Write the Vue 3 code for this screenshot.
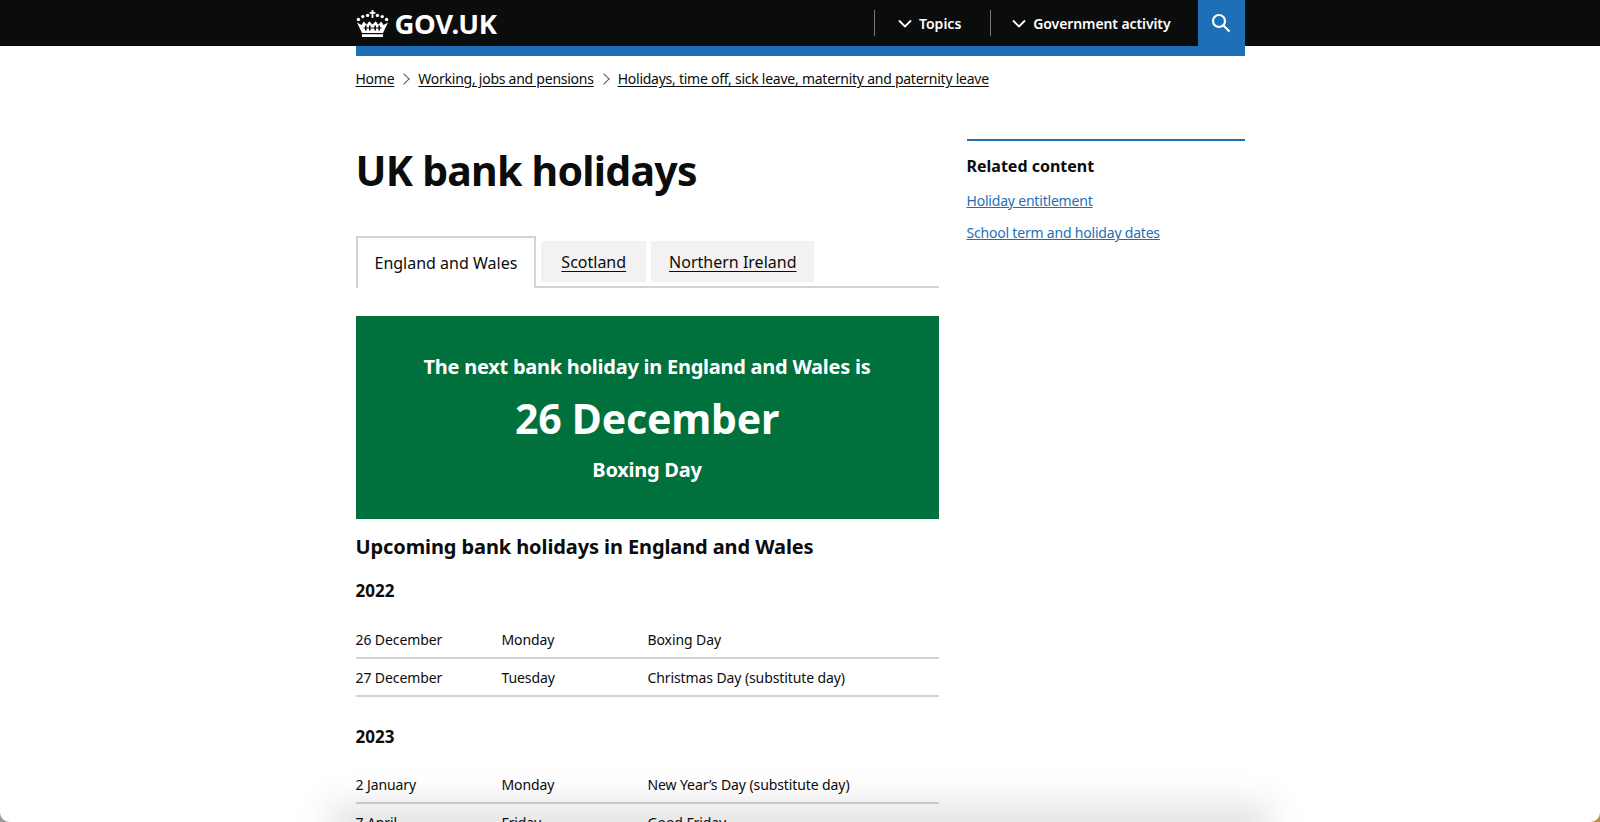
<script setup>
const crumbs = [
  'Home',
  'Working, jobs and pensions',
  'Holidays, time off, sick leave, maternity and paternity leave'
]
const tabs = [
  { name: 'Scotland', cls: 'wide' },
  { name: 'Northern Ireland', cls: '' }
]
const years = [
  {
    year: '2022',
    rows: [
      ['26 December', 'Monday', 'Boxing Day'],
      ['27 December', 'Tuesday', 'Christmas Day (substitute day)']
    ]
  },
  {
    year: '2023',
    rows: [
      ['2 January', 'Monday', "New Year\u2019s Day (substitute day)"],
      ['7 April', 'Friday', 'Good Friday']
    ]
  }
]
</script>

<template>
  <div class="page">
    <header class="top">
      <div class="top_inner">
        <a class="logo">
          <svg width="34" height="27" viewBox="0 0 34 27" fill="#fff">
            <path d="M15.6 0h1.8v2h2v1.7h-2V8h-1.8V3.7h-2V2h2z"/>
            <circle cx="2.4" cy="9.5" r="1.7"/><circle cx="6.8" cy="6.6" r="1.7"/><circle cx="11.6" cy="5.4" r="1.7"/>
            <circle cx="21.4" cy="5.4" r="1.7"/><circle cx="26.2" cy="6.6" r="1.7"/><circle cx="30.6" cy="9.5" r="1.7"/>
            <path d="M1 12.5l4.5 2.5 2.2-3.6 3 3.4 2.5-3.6 3.3 3.2 3.3-3.2 2.5 3.6 3-3.4 2.2 3.6 4.5-2.5-5 10.5H6z"/>
            <path d="M9 15.5h1.6v5H9zM13 15.5h1.6v5H13zM18.4 15.5H20v5h-1.6zM22.4 15.5H24v5h-1.6zM7.5 17.4h18v1.2h-18z" fill="#0b0c0c"/>
            <path d="M6 24.2h21V27H6z"/>
          </svg>
          <span>GOV.UK</span>
        </a>
        <nav class="menu">
          <a class="menu_item first">
            <svg width="14" height="9" viewBox="0 0 14 9"><path d="M1 1.5l6 6 6-6" fill="none" stroke="#fff" stroke-width="1.8"/></svg>
            Topics
          </a>
          <a class="menu_item">
            <svg width="14" height="9" viewBox="0 0 14 9"><path d="M1 1.5l6 6 6-6" fill="none" stroke="#fff" stroke-width="1.8"/></svg>
            <span class="gov_text">Government activity</span>
          </a>
          <a class="search">
            <svg width="20" height="20" viewBox="0 0 20 20" fill="none" stroke="#fff" stroke-width="2.2">
              <circle cx="8" cy="8" r="6"/><path d="M12.5 12.5l6 6"/>
            </svg>
          </a>
        </nav>
      </div>
    </header>

    <div class="wrap">
      <div class="blue_bar"></div>
      <ol class="crumbs">
        <li v-for="(c, i) in crumbs" :key="c">
          <span v-if="i > 0" class="chev"></span>
          <a>{{ c }}</a>
        </li>
      </ol>

      <div class="cols">
        <main class="main">
          <h1>UK bank holidays</h1>
          <div class="tabs">
            <span class="tab active">England and Wales</span>
            <a v-for="t in tabs" :key="t.name" class="tab" :class="t.cls">{{ t.name }}</a>
          </div>

          <section class="banner">
            <p class="banner_top">The next bank holiday in England and Wales is</p>
            <p class="banner_date">26 December</p>
            <p class="banner_name">Boxing Day</p>
          </section>

          <h2>Upcoming bank holidays in England and Wales</h2>
          <div v-for="y in years" :key="y.year" class="year">
            <h3>{{ y.year }}</h3>
            <div v-for="r in y.rows" :key="r[0]" class="row">
              <span>{{ r[0] }}</span>
              <span>{{ r[1] }}</span>
              <span>{{ r[2] }}</span>
            </div>
          </div>
        </main>

        <aside class="side">
          <h4>Related content</h4>
          <a>Holiday entitlement</a>
          <a>School term and holiday dates</a>
        </aside>
      </div>
    </div>
    <div class="fade"></div>
    <div class="corner left"></div>
    <div class="corner right"></div>
  </div>
</template>

<style>
html, body { margin: 0; height: 100%; overflow: hidden; background: #fff; }
</style>

<style scoped>
.page {
  height: 822px;
  overflow: hidden;
  position: relative;
  font-family: "Noto Sans", "Liberation Sans", sans-serif;
  color: #0b0c0c;
  background: #fff;
}
a { color: inherit; }
.top { background: #0b0c0c; height: 46px; }
.top_inner {
  width: 889px;
  height: 46px;
  margin: 0 auto;
  display: flex;
  justify-content: space-between;
  align-items: center;
}
.logo { display: flex; align-items: center; gap: 5px; color: #fff; font-weight: 700; font-size: 27.5px; letter-spacing: -0.3px; }
.menu { display: flex; align-items: center; height: 46px; }
.menu_item {
  display: flex;
  align-items: center;
  gap: 7px;
  height: 26px;
  padding: 0 27px 0 21px;
  border-left: 1px solid #777;
  color: #fff;
  font-size: 14px;
  font-weight: 600;
}
.menu_item.first { padding: 0 29px 0 23px; }
.gov_text { letter-spacing: -0.1px; }
.search {
  width: 47px;
  height: 46px;
  background: #1d70b8;
  display: flex;
  align-items: center;
  justify-content: center;
}
.wrap { width: 889px; margin: 0 auto; }
.blue_bar { height: 10px; background: #1d70b8; }
.crumbs {
  list-style: none;
  margin: 0;
  padding: 14px 0 0;
  display: flex;
  font-size: 14px;
  line-height: 18px;
  letter-spacing: -0.25px;
}
.crumbs li { display: flex; align-items: center; }
.crumbs a { text-decoration: underline; text-underline-offset: 2px; }
.chev {
  width: 7px;
  height: 7px;
  margin: 0 10px 0 6px;
  border-top: 1px solid #505a5f;
  border-right: 1px solid #505a5f;
  transform: rotate(45deg);
}
.cols { display: flex; gap: 28px; padding-top: 51px; }
.main { width: 583px; }
h1 { margin: 6px 0 41px; font-size: 41px; line-height: 50px; font-weight: 700; letter-spacing: -0.75px; }
.tabs { display: flex; gap: 5px; border-bottom: 2px solid #d2d3d4; height: 50px; }
.tab {
  height: 41px;
  margin-top: 5px;
  padding: 0 18px;
  background: #f3f2f1;
  display: flex;
  align-items: center;
  font-size: 16px;
  text-decoration: underline;
  text-underline-offset: 3px;
}
.tab.wide { padding: 0 20px; }
.tab.active {
  background: #fff;
  border: 2px solid #d2d3d4;
  border-bottom: 0;
  text-decoration: none;
  height: 52px;
  margin-top: 0;
  box-sizing: border-box;
  padding: 0 17px;
}
.banner {
  margin-top: 28px;
  padding-top: 2px;
  box-sizing: border-box;
  background: #00703c;
  color: #fff;
  height: 203px;
  text-align: center;
  font-weight: 700;
  display: flex;
  flex-direction: column;
  align-items: center;
  justify-content: center;
}
.banner p { margin: 0; }
.banner_top { font-size: 20px; line-height: 26px; letter-spacing: -0.25px; }
.banner_date { font-size: 41px; line-height: 50px; padding: 13px 0 14px; letter-spacing: -0.2px; }
.banner_name { font-size: 20px; line-height: 26px; letter-spacing: -0.25px; }
h2 { margin: 15px 0 0; font-size: 20px; line-height: 26px; font-weight: 700; letter-spacing: -0.1px; }
h3 { margin: 0; font-size: 17px; line-height: 22px; font-weight: 700; padding: 20px 0 19px; }
.year + .year { padding-top: 9px; }
.year + .year h3 { padding-bottom: 18px; }
.row {
  display: grid;
  grid-template-columns: 146px 146px 1fr;
  height: 38px;
  box-sizing: border-box;
  border-bottom: 2px solid #d2d3d4;
  font-size: 14px;
  letter-spacing: -0.1px;
  align-items: center;
}
.side { width: 278px; border-top: 2px solid #1d70b8; padding-top: 14px; align-self: flex-start; display: flex; flex-direction: column; }
h4 { margin: 0 0 15px; font-size: 16px; line-height: 22px; font-weight: 700; }
.side a { color: #1d70b8; text-decoration: underline; font-size: 14px; line-height: 18px; margin-bottom: 14px; letter-spacing: -0.2px; }
.fade {
  position: absolute;
  left: 330px;
  right: 330px;
  bottom: -30px;
  height: 50px;
  background: rgba(0,0,0,0.1);
  filter: blur(16px);
  pointer-events: none;
}
.corner { position: absolute; bottom: 0; width: 10px; height: 10px; }
.corner.left { left: 0; background: radial-gradient(circle at 100% 0, transparent 9.5px, #9a9a9a 10.5px); }
.corner.right { right: 0; background: radial-gradient(circle at 0 0, transparent 9.5px, #c98a3a 10.5px); }
</style>
